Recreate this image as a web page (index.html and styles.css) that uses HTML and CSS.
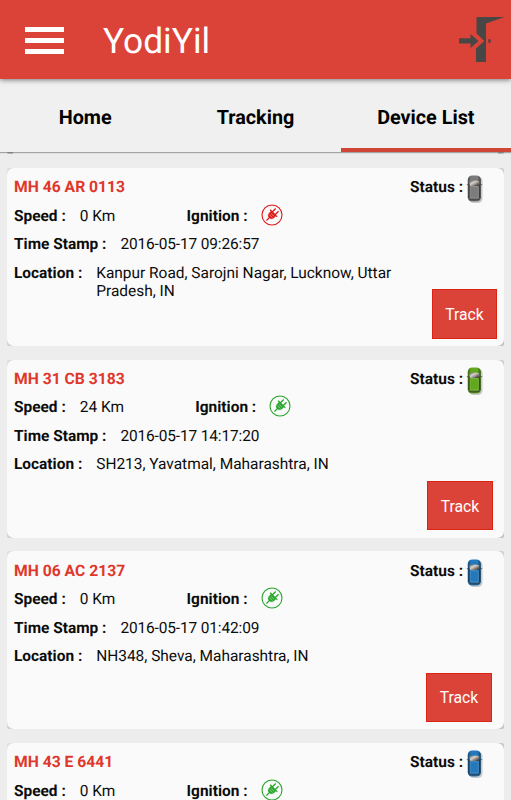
FILE: index.html
```html
<!DOCTYPE html>
<html lang="en">
<head>
<meta charset="utf-8">
<title>YodiYil</title>
<link rel="stylesheet" href="styles.css">
</head>
<body>
<svg class="defs" aria-hidden="true">
  <defs>
    <linearGradient id="glass" x1="0" y1="0" x2="1" y2="1"><stop offset="0" stop-color="#555"/><stop offset=".4" stop-color="#d8d2cc"/><stop offset="1" stop-color="#26201e"/></linearGradient>
    <linearGradient id="edge" x1="0" x2="1"><stop offset="0" stop-color="#000" stop-opacity=".4"/><stop offset=".25" stop-color="#000" stop-opacity="0"/><stop offset=".75" stop-color="#000" stop-opacity="0"/><stop offset="1" stop-color="#000" stop-opacity=".5"/></linearGradient>
    <symbol id="plug" viewBox="0 0 22 22">
      <circle cx="11" cy="11" r="10" fill="none" stroke="currentColor" stroke-width="1.1"/>
      <g transform="rotate(45 11 11)" stroke="currentColor" fill="currentColor">
        <path d="M7.6 9h6.8v2.4c0 2.2-1.4 3.5-3.4 3.5s-3.4-1.3-3.4-3.5z" stroke-width=".4"/>
        <path d="M6 8.6h10M9 8V3.8M13 8V3.8M11 14v4.8" fill="none" stroke-width="1.3"/>
      </g>
      <path d="M8.4 10.6l3 3M10 9.4l3 3" stroke="#fafafa" stroke-width=".5"/>
    </symbol>
    <symbol id="car" viewBox="0 0 18 30">
      <rect x="3" y="2.5" width="13.5" height="26.5" rx="4.5" fill="#999" opacity=".5"/>
      <path d="M.8 10.6h15.4" stroke="#666" stroke-width=".9"/>
      <rect x="1.8" y="1.4" width="13" height="26.2" rx="4.4" fill="currentColor"/>
      <rect x="1.8" y="1.4" width="13" height="26.2" rx="4.4" fill="url(#edge)"/>
      <path d="M3.4 7.2q4.9-1.6 9.8 0l-.6 4.8H4z" fill="url(#glass)"/>
      <path d="M3 10.5v13.5M13.6 10.5v13.5" stroke="#222" stroke-width=".9" opacity=".6"/>
      <path d="M4.2 12.7h8.2V24H4.2z" fill="currentColor" stroke="#fff" stroke-opacity=".25" stroke-width=".6"/>
      <path d="M4 24.8h8.6l1 1.2q-5.3 1.4-10.6 0z" fill="#333" opacity=".65"/>
    </symbol>
  </defs>
</svg>
<header class="bar">
  <div class="menu"><i></i><i></i><i></i></div>
  <h1>YodiYil</h1>
  <svg class="door" viewBox="0 0 46 46"><path fill="#484745" d="M17.5 0h28L27 6.5V45H17V31.5l8.3-7.5-7.8-7.5zM0 21.3h11.5V17l8 6.9-8 7v-4.5H0z"/><rect x="29.3" y="22" width="2.4" height="4" rx="1.1" fill="#484745"/></svg>
</header>
<nav class="tabs"><a>Home</a><a>Tracking</a><a class="active">Device List</a></nav>
<main class="list">
  <div class="peek"></div>
  <section class="card">
    <div class="row"><b class="plate">MH 46 AR 0113</b><span class="status"><b>Status :</b><svg class="car gray"><use href="#car"/></svg></span></div>
    <div class="row"><b>Speed :</b><span class="speed">0 Km</span><b>Ignition :</b><svg class="plug off"><use href="#plug"/></svg></div>
    <div class="row time"><b>Time Stamp :</b><span>2016-05-17 09:26:57</span></div>
    <div class="row place"><b>Location :</b><span>Kanpur Road, Sarojni Nagar, Lucknow, Uttar<br>Pradesh, IN</span></div>
    <button class="track">Track</button>
  </section>
  <section class="card second">
    <div class="row"><b class="plate">MH 31 CB 3183</b><span class="status"><b>Status :</b><svg class="car green"><use href="#car"/></svg></span></div>
    <div class="row"><b>Speed :</b><span class="speed">24 Km</span><b>Ignition :</b><svg class="plug"><use href="#plug"/></svg></div>
    <div class="row time"><b>Time Stamp :</b><span>2016-05-17 14:17:20</span></div>
    <div class="row place"><b>Location :</b><span>SH213, Yavatmal, Maharashtra, IN</span></div>
    <button class="track">Track</button>
  </section>
  <section class="card third">
    <div class="row"><b class="plate">MH 06 AC 2137</b><span class="status"><b>Status :</b><svg class="car blue"><use href="#car"/></svg></span></div>
    <div class="row"><b>Speed :</b><span class="speed">0 Km</span><b>Ignition :</b><svg class="plug"><use href="#plug"/></svg></div>
    <div class="row time"><b>Time Stamp :</b><span>2016-05-17 01:42:09</span></div>
    <div class="row place"><b>Location :</b><span>NH348, Sheva, Maharashtra, IN</span></div>
    <button class="track">Track</button>
  </section>
  <section class="card last">
    <div class="row"><b class="plate">MH 43 E 6441</b><span class="status"><b>Status :</b><svg class="car blue"><use href="#car"/></svg></span></div>
    <div class="row"><b>Speed :</b><span class="speed">0 Km</span><b>Ignition :</b><svg class="plug"><use href="#plug"/></svg></div>
  </section>
</main>
</body>
</html>
```

FILE: styles.css
```css
* { box-sizing: border-box; }
body {
  margin: 0;
  height: 800px;
  overflow: hidden;
  display: flex;
  flex-direction: column;
  background: #ededed;
  color: #0c0c0c;
  font: 15.45px/18px Roboto, sans-serif;
  text-rendering: geometricPrecision;
}
.defs { position: absolute; width: 0; height: 0; }
.bar {
  flex: none;
  height: 79px;
  display: flex;
  align-items: center;
  padding: 0 6px 0 25px;
  background: #dc4338;
  color: #fff;
  box-shadow: 0 1px 5px rgba(0, 0, 0, .5);
  z-index: 2;
}
.menu { width: 39px; display: grid; gap: 6px; padding-top: 2px; }
.menu i { height: 5px; background: #fff; }
h1 { margin: 3px 0 0 39px; font-size: 35.3px; font-weight: 400; line-height: 42px; }
.door { width: 46px; height: 46px; margin-left: auto; }
.tabs {
  flex: none;
  height: 73px;
  display: grid;
  grid-template-columns: repeat(3, 1fr);
  background: #f0f0f0;
  box-shadow: 0 1px 1px rgba(0, 0, 0, .3);
  z-index: 1;
}
.tabs a {
  display: flex;
  align-items: center;
  justify-content: center;
  padding-top: 8px;
  border-bottom: 4px solid transparent;
  font-size: 19.8px;
  font-weight: 700;
  color: #000;
}
.tabs .active { border-color: #cf4636; }
.list {
  flex: 1;
  min-height: 0;
  overflow: hidden;
  padding: 0 7px;
  display: flex;
  flex-direction: column;
  gap: 13.7px;
}
.peek {
  flex: none;
  height: 2.3px;
  border-radius: 0 0 2px 2px;
  background: linear-gradient(90deg, #bbb 6px, transparent 6px 491px, #bbb 491px);
}
.card {
  flex: none;
  position: relative;
  isolation: isolate;
  height: 178px;
  display: flex;
  flex-direction: column;
  padding: 5.2px 7px 7.3px;
  border-radius: 2px;
  background: linear-gradient(160deg, #dedede, #c2c2c2);
}
.card::before {
  content: "";
  position: absolute;
  inset: 0;
  z-index: -1;
  border-radius: 7px;
  background: #fafafa;
}
.last { flex: 0 1 178px; min-height: 0; padding-bottom: 0; border-radius: 2px 2px 0 0; }
.last::before { border-radius: 7px 7px 0 0; }
.last .row { flex: none; }
.row { height: 28.4px; display: flex; align-items: center; white-space: nowrap; }
.row > b + span { margin-left: 14px; }
.row b { font-weight: 700; }
.row .plate { color: #df372b; font-size: 15.7px; }
.status { margin-left: auto !important; display: flex; align-items: center; padding-right: 13px; }
.speed { margin-right: 71.3px; }
.time span { letter-spacing: -.13px; }
.place { align-items: flex-start; padding-top: 5.2px; }
.car { width: 18px; height: 30px; margin: 4px 0 0 3px; }
.gray { color: #7c7c7c; }
.green { color: #62a81d; }
.blue { color: #2479bd; }
.plug { width: 22px; height: 22px; margin: -2px 0 0 13px; color: #25a52a; }
.off { color: #dc1717; }
.track {
  align-self: flex-end;
  margin: auto 0 0;
  width: 65px;
  height: 49.5px;
  padding: 2px 0 0;
  border: 1px solid #dc2314;
  background: #dc4338;
  color: #fff;
  font: 15.7px/18px Roboto, sans-serif;
}
.second .track { width: 66px; margin-right: 4px; }
.third .track { width: 66px; margin-right: 5px; }
```
